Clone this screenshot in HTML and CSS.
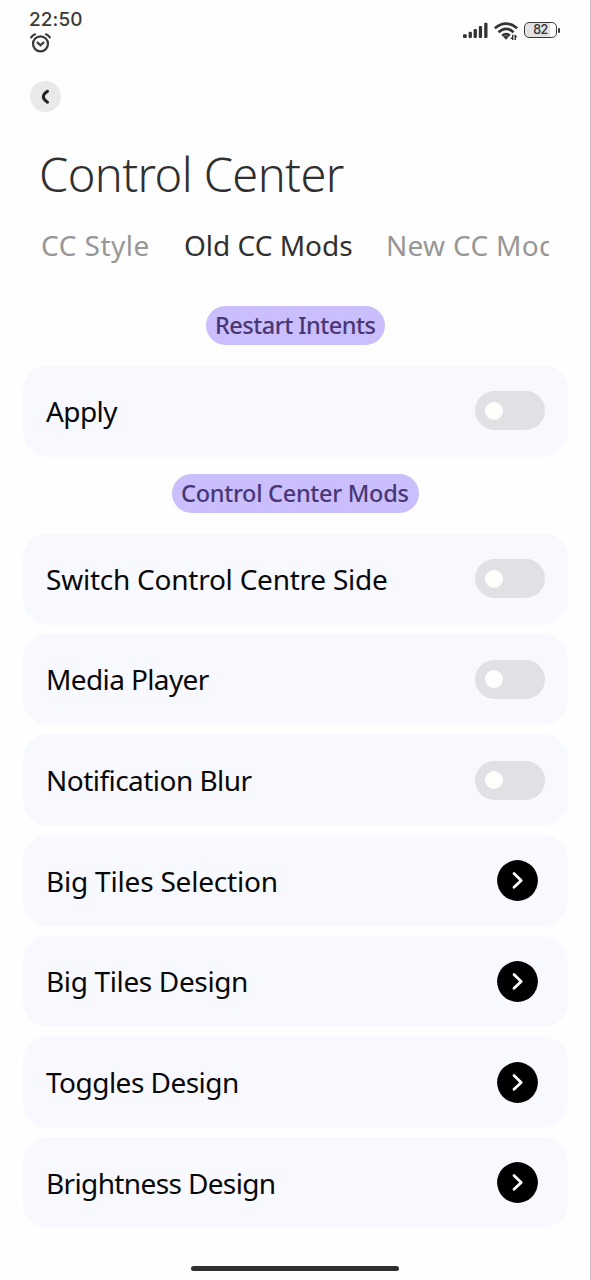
FILE: index.html
```html
<!DOCTYPE html>
<html lang="en">
<head>
<meta charset="utf-8">
<title>Control Center</title>
<link rel="stylesheet" href="styles.css">
</head>
<body>
<div class="screen">
  <header class="status">
    <div class="status-left">
      <span class="clock">22:50</span>
      <svg class="alarm" width="22" height="20" viewBox="0 0 22 20" fill="none" stroke="#3a3a3a" stroke-width="2.2" stroke-linecap="round"><circle cx="11.5" cy="10.8" r="7.5"/><path d="M8.6 9.6l2.9 2.6 2.9-2.6M2.2 4.4Q3.6 2.2 6 1.3M17 1.3Q19.4 2.2 20.8 4.4"/></svg>
    </div>
    <div class="status-right">
      <svg class="signal" width="26" height="17" viewBox="0 0 26 17" fill="#333"><rect x="0" y="12.2" width="3.8" height="3.8" rx="1"/><rect x="5.6" y="9.7" width="3.3" height="6.3" rx="1"/><rect x="10.6" y="7" width="3.3" height="9" rx="1"/><rect x="15.8" y="4" width="3.3" height="12" rx="1"/><rect x="21.2" y="0.8" width="3.3" height="15.2" rx="1"/></svg>
      <svg class="wifi" width="25" height="19" viewBox="0 0 25 19" fill="none" stroke="#333" stroke-width="2.7"><path d="M0.8 6.3Q12 -3.2 23.2 6.3M4.5 10.2Q12 3.4 19.5 10.2M8.2 13.7Q12 10.4 15.8 13.7"/><path d="M9.2 14.8Q12 12.8 14.8 14.8L12 17.8Z" fill="#333" stroke="none"/><path d="M18.7 12.8v5.2M16.8 16.2h1.9M21.2 18v-5.2M23 14.6h-1.8" stroke-width="1.4"/></svg>
      <div class="battery"><span class="battery-text">82</span></div><i class="battery-tip"></i>
    </div>
  </header>
  <button class="back" aria-label="Back"><svg width="31" height="31" viewBox="0 0 31 31" fill="none" stroke="#222" stroke-width="3" stroke-linecap="round"><path d="M17.5 10.3Q9.2 15.8 17.5 21.2"/></svg></button>
  <h1 class="title">Control Center</h1>
  <nav class="tabs">
    <span class="tab tab-style">CC Style</span>
    <span class="tab tab-old active">Old CC Mods</span>
    <span class="tab tab-new">New CC Mods</span>
  </nav>
  <main class="content">
    <h2 class="pill pill-restart">Restart Intents</h2>
    <section class="cards">
      <div class="card"><span class="label l-apply">Apply</span><i class="switch"></i></div>
    </section>
    <h2 class="pill pill-mods">Control Center Mods</h2>
    <section class="cards">
      <div class="card"><span class="label l-side">Switch Control Centre Side</span><i class="switch"></i></div>
      <div class="card"><span class="label l-media">Media Player</span><i class="switch"></i></div>
      <div class="card"><span class="label l-blur">Notification Blur</span><i class="switch"></i></div>
      <div class="card"><span class="label l-selection">Big Tiles Selection</span><svg class="go" viewBox="0 0 41 41"><circle cx="20.5" cy="20.5" r="20.4"/><path d="M17 13.6l7.2 6.8-7.2 6.8"/></svg></div>
      <div class="card"><span class="label l-tiles">Big Tiles Design</span><svg class="go" viewBox="0 0 41 41"><circle cx="20.5" cy="20.5" r="20.4"/><path d="M17 13.6l7.2 6.8-7.2 6.8"/></svg></div>
      <div class="card"><span class="label l-toggles">Toggles Design</span><svg class="go" viewBox="0 0 41 41"><circle cx="20.5" cy="20.5" r="20.4"/><path d="M17 13.6l7.2 6.8-7.2 6.8"/></svg></div>
      <div class="card"><span class="label l-bright">Brightness Design</span><svg class="go" viewBox="0 0 41 41"><circle cx="20.5" cy="20.5" r="20.4"/><path d="M17 13.6l7.2 6.8-7.2 6.8"/></svg></div>
    </section>
  </main>
  <i class="home-bar"></i>
</div>
</body>
</html>
```
FILE: styles.css
```css
* { box-sizing: border-box; }
body { margin: 0; background: #fefefe; font-family: "Noto Sans", sans-serif; }
.screen { width: 591px; height: 1280px; overflow: hidden; display: flex; flex-direction: column; border-right: 1px solid #c4c4c4; }
.status { display: flex; justify-content: space-between; height: 81px; padding: 9px 30px 0 29px; flex: none; }
.status-left { display: flex; flex-direction: column; }
.clock { font: 500 19px/22px Inter, sans-serif; letter-spacing: 0.1px; color: #3a3a3a; }
.alarm { margin-top: 2px; }
.status-right { display: flex; align-items: flex-start; padding-top: 13px; }
.wifi { margin: 0 5px 0 5px; }
.battery { width: 33px; height: 16px; border: 1.8px solid #3a3a3a; border-radius: 5px; background: linear-gradient(90deg, #e2e2e2 80%, #fefefe 80%); display: flex; align-items: center; justify-content: center; }
.battery-text { font: 500 12.5px/12px Inter, sans-serif; letter-spacing: -0.6px; color: #333; }
.battery-tip { width: 2px; height: 5px; margin: 6px 0 0 1px; background: #3a3a3a; border-radius: 1px; }
.back { width: 31px; height: 31px; margin-left: 30px; padding: 0; border: 0; border-radius: 50%; background: #e9e9e9; flex: none; }
.back svg { display: block; }
.title { margin: 30px 0 0 39px; font-weight: 300; font-size: 47px; line-height: 64px; letter-spacing: -0.6px; color: #303030; white-space: nowrap; }
.tabs { display: flex; width: 508px; height: 40px; margin: 19px 0 0 41px; overflow: hidden; flex: none; white-space: nowrap; font-size: 28px; line-height: 40px; color: #979797; }
.tab { flex: none; }
.tab-style { width: 143px; letter-spacing: 0.5px; }
.tab-old { width: 202px; }
.tab-new { letter-spacing: 0.3px; }
.active { color: #303030; }
.content { display: flex; flex-direction: column; align-items: center; padding: 41px 22px 0 23px; }
.pill { height: 39px; margin: 0; border-radius: 20px; background: #cbbefc; color: #483777; font-weight: 500; font-size: 23.5px; line-height: 38px; white-space: nowrap; padding-left: 9px; }
.pill-restart { width: 179px; letter-spacing: -0.5px; }
.pill-mods { width: 247px; margin-top: 17px; letter-spacing: -0.28px; }
.cards { width: 545px; margin-top: 20px; display: grid; gap: 9.17px; }
.card { height: 91.5px; border-radius: 25px; background: #f8f9fe; display: flex; align-items: center; justify-content: space-between; padding: 0 23px; }
.pill-mods + .cards { margin-top: 20.5px; }
.label { font-size: 28px; line-height: 40px; color: #080808; white-space: nowrap; }
.l-apply { letter-spacing: -0.6px; }
.l-side { letter-spacing: -0.24px; }
.l-media { letter-spacing: -0.62px; }
.l-blur { letter-spacing: -0.54px; }
.l-selection { letter-spacing: -0.2px; }
.l-tiles { letter-spacing: -0.36px; }
.l-toggles { letter-spacing: -0.52px; }
.l-bright { letter-spacing: -0.63px; }
.switch { width: 70px; height: 39px; border-radius: 20px; background: #e1e0e5; display: flex; align-items: center; padding-left: 10px; }
.switch::before { content: ""; width: 18px; height: 18px; border-radius: 50%; background: #fffefd; }
.go { width: 41px; height: 41px; margin-right: 7px; fill: #000; }
.go path { fill: none; stroke: #fff; stroke-width: 2.8; stroke-linecap: round; stroke-linejoin: round; }
.home-bar { width: 208px; height: 5px; margin: auto 0 9px 191px; border-radius: 3px; background: #303030; flex: none; }
```
